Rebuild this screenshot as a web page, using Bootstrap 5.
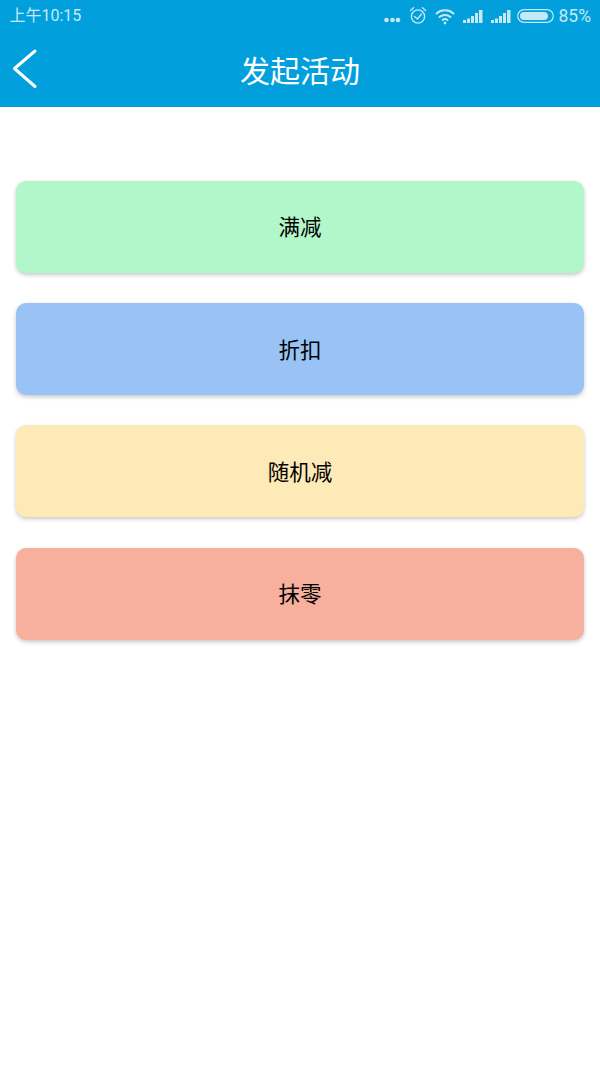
<!DOCTYPE html>
<html lang="zh">
<head>
<meta charset="utf-8">
<title>发起活动</title>
<link href="https://cdn.jsdelivr.net/npm/bootstrap@5.3.0/dist/css/bootstrap.min.css" rel="stylesheet">
<style>
html, body { height: 100%; }
body { font-family: "Roboto", "Noto Sans CJK SC", sans-serif; background: #fff; }
.app-head { background: #019fdc; height: 107px; color: #fff; }
.status-row { height: 32px; padding: 0 9px 0 9.500px; color: #c5e9f6; font-size: 16px; line-height: 32px; }
.status-time { font-family: "Roboto", "Noto Sans CJK SC", sans-serif; }
.status-batt { margin-left: -1.500px; }
.status-pct { font-size: 17.500px; margin-left: -3.500px; }
.title-row { height: 75px; }
.back-link { left: 12px; top: 16px; width: 26px; height: 42px; }
.page-title { font-size: 30px; line-height: 74px; margin: 0; font-weight: 400; font-family: "Noto Sans CJK SC", sans-serif; }
.action-list { padding: 74px 16px 0; gap: 30.200px; }
.action-tile { height: 92px; padding-bottom: 1px; border-radius: 10px; box-shadow: 0 2px 4px rgba(0,0,0,.22); font-size: 21.500px; color: #000; font-family: "Noto Sans CJK SC", sans-serif; }
.tile-green { background: #b1f7ca; }
.tile-blue { background: #98c3f4; }
.tile-yellow { background: #feeab7; }
.tile-red { background: #f7b09e; }
</style>
</head>
<body>
<header class="app-head">
  <div class="status-row d-flex justify-content-between align-items-center">
    <span class="status-time">上午10:15</span>
    <div class="d-flex align-items-center gap-2">
      <svg width="18" height="6" viewBox="0 0 18 6" fill="#c5e9f6" class="mt-2"><circle cx="3.500" cy="3" r="2.300"/><circle cx="9.500" cy="3" r="2.300"/><circle cx="15" cy="3" r="2.300"/></svg>
      <svg width="18" height="20" viewBox="0 0 18 20" fill="none" stroke="#c5e9f6" stroke-width="1.400" stroke-linecap="round"><circle cx="9" cy="10.500" r="6.600"/><path d="M5.500 10.500 8.500 13 12.500 8M1.500 4.500 4.500 1.800M16.500 4.500 13.500 1.800"/></svg>
      <svg width="20" height="17" viewBox="0 0 20 17" fill="none" stroke="#c5e9f6" stroke-width="2" stroke-linecap="round"><path d="M1.500 5.500C6 1.300 14 1.300 18.500 5.500M4.500 9c3.200-2.800 7.800-2.800 11 0M7.500 12c1.600-1.200 3.400-1.200 5 0"/><circle cx="10" cy="15" r="1.400" fill="#c5e9f6" stroke="none"/></svg>
      <svg width="20" height="14" viewBox="0 0 20 14" fill="#c5e9f6"><path d="M0 11h3v3H0zM4 9.500h3V14H4zM8 7h3v7H8zM12 4h3v10h-3zM16 1h3.500v13H16z"/></svg>
      <svg width="20" height="14" viewBox="0 0 20 14" fill="#c5e9f6"><path d="M0 11h3v3H0zM4 9.500h3V14H4zM8 7h3v7H8zM12 4h3v10h-3zM16 1h3.500v13H16z"/></svg>
      <svg class="status-batt" width="37" height="14" viewBox="0 0 37 14"><rect x="0.700" y="0.700" width="35.600" height="12.600" rx="6.300" fill="none" stroke="#c5e9f6" stroke-width="1.200"/><rect x="3" y="3" width="28" height="8" rx="4" fill="#c5e9f6"/></svg>
      <span class="status-pct">85%</span>
    </div>
  </div>
  <div class="title-row position-relative text-center">
    <a class="back-link position-absolute d-block" href="#" aria-label="返回">
      <svg width="26" height="42" viewBox="0 0 26 42" fill="none" stroke="#fff" stroke-width="3" stroke-linecap="round" stroke-linejoin="round"><path d="M23 3 2.500 20.500 23 38.500"/></svg>
    </a>
    <h1 class="page-title">发起活动</h1>
  </div>
</header>
<main class="action-list d-flex flex-column">
  <div class="action-tile tile-green d-flex align-items-center justify-content-center">满减</div>
  <div class="action-tile tile-blue d-flex align-items-center justify-content-center">折扣</div>
  <div class="action-tile tile-yellow d-flex align-items-center justify-content-center">随机减</div>
  <div class="action-tile tile-red d-flex align-items-center justify-content-center">抹零</div>
</main>
<script src="https://cdn.jsdelivr.net/npm/bootstrap@5.3.0/dist/js/bootstrap.bundle.min.js"></script>
</body>
</html>
